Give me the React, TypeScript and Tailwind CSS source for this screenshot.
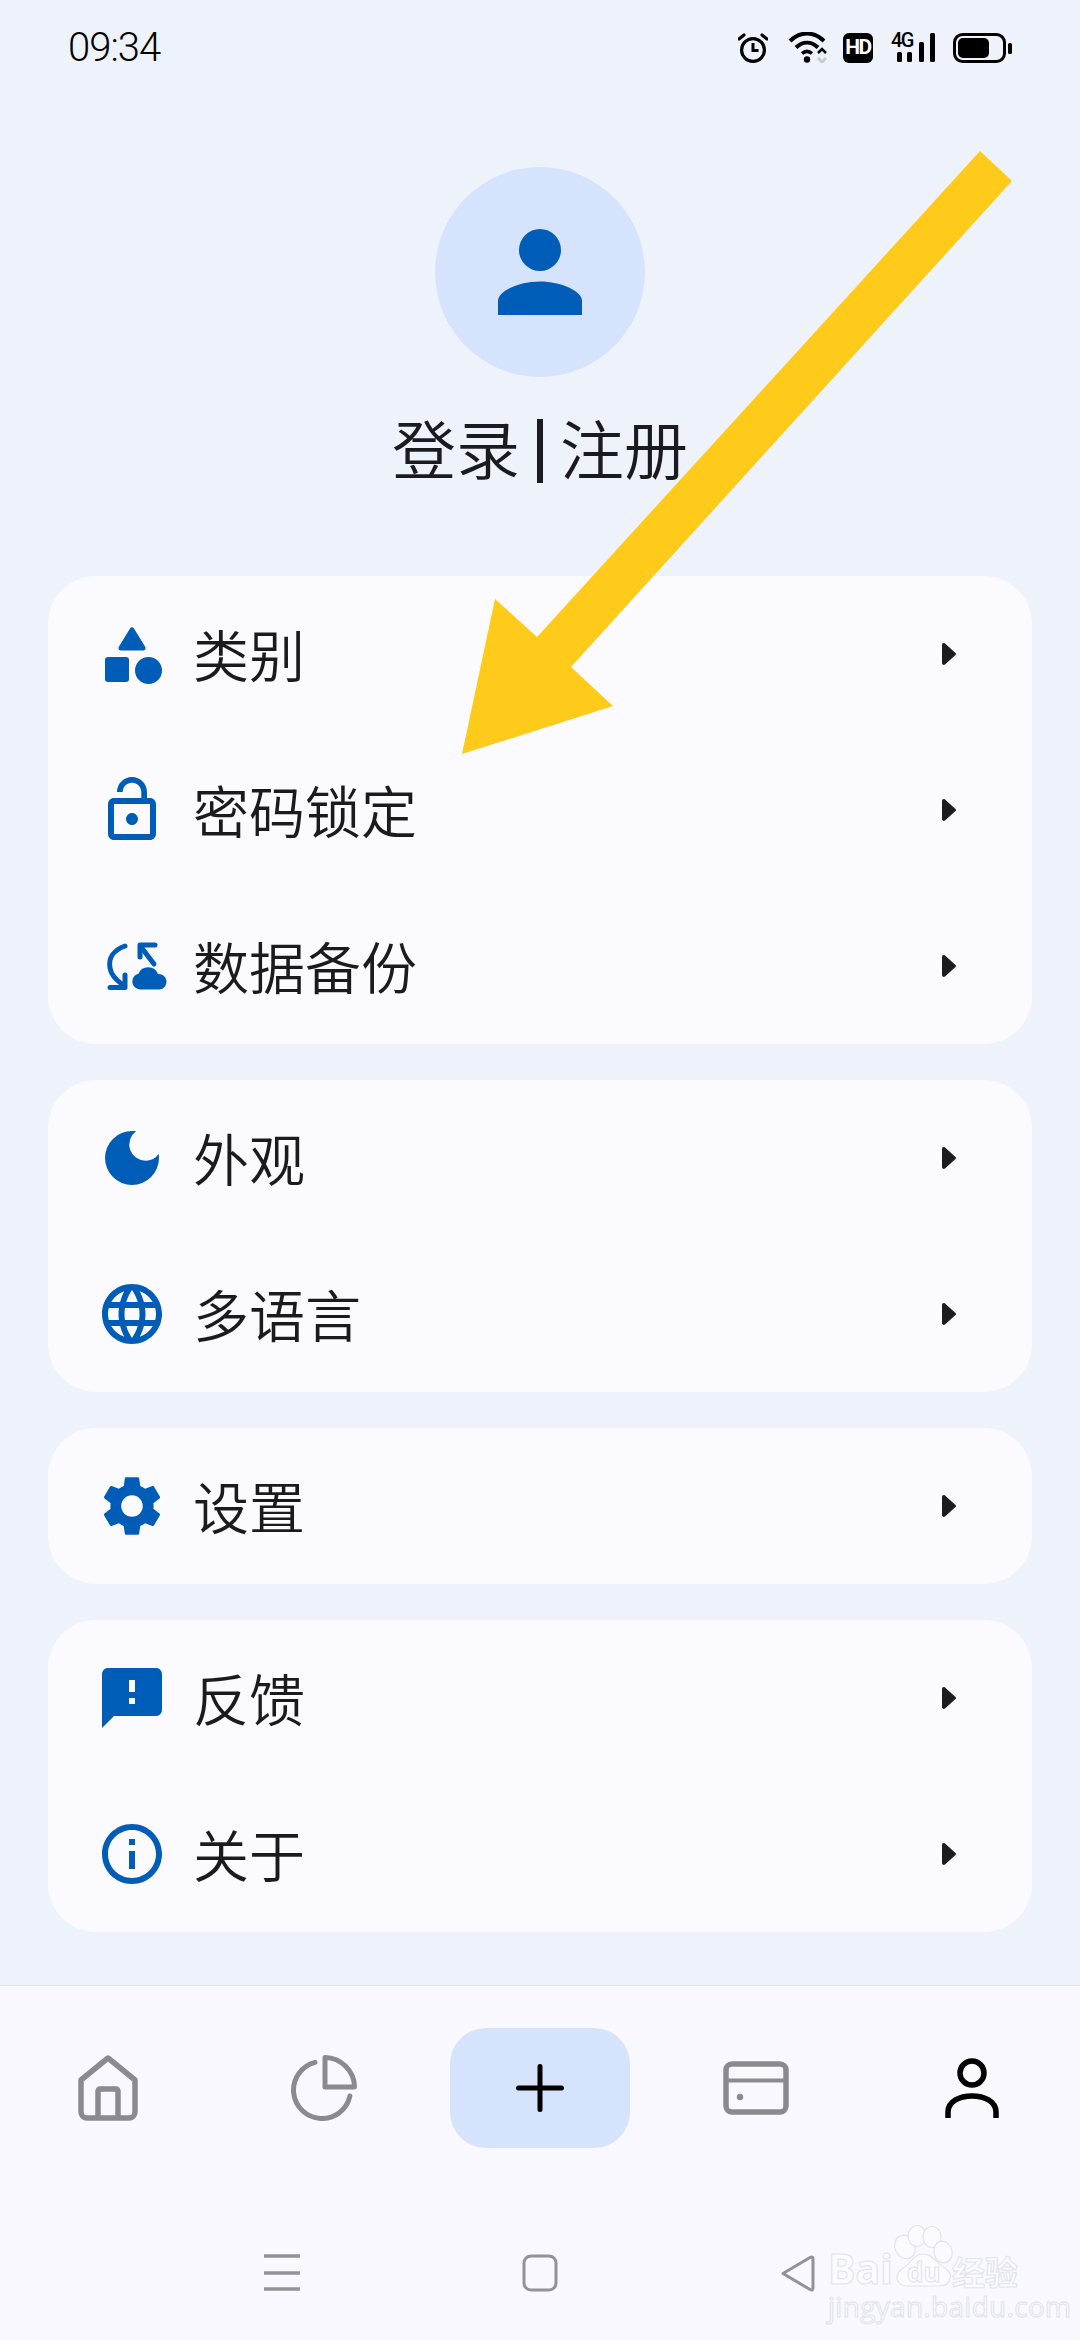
import type { ReactNode } from "react";
import {
  MdDarkMode,
  MdFeedback,
  MdInfoOutline,
  MdLanguage,
  MdLockOpen,
  MdSettings,
} from "react-icons/md";

const CategoryIcon = () => (
  <svg width="72" height="72" viewBox="0 0 72 72" fill="#005db7">
    <polygon points="36,12 47,30 25,30" stroke="#005db7" strokeWidth="5" strokeLinejoin="round" />
    <rect x="9" y="39" width="24" height="25" rx="3" />
    <circle cx="52.5" cy="52.5" r="13.5" />
  </svg>
);

const BackupIcon = () => (
  <svg width="72" height="72" viewBox="0 0 72 72" fill="none" stroke="#005db7" strokeWidth="5" strokeLinecap="round" strokeLinejoin="round">
    <path d="M29 16C18 20 12 28 14 38c1 7 6 12 13 17" />
    <path d="M14 57.5H29V45" />
    <path d="M59 15H44V27" />
    <path d="M45 17L58 34" />
    <path d="M44 59.5a8 8 0 0 1-1.5-15.8A10.5 10.5 0 0 1 62 44a7.7 7.7 0 0 1 1.5 15.5z" fill="#005db7" stroke="none" />
  </svg>
);

const Chevron = () => (
  <svg width="14" height="22" viewBox="0 0 14 22" fill="#1c1c1f">
    <path d="M3 0.5L13.5 10a1.4 1.4 0 0 1 0 2L3 21.5C1.5 22.5 0 21.5 0 20V2C0 0.5 1.5-0.5 3 0.5z" />
  </svg>
);

type Item = { label: string; icon: ReactNode };

const blue = "text-[#005db7]";
const groups: Item[][] = [
  [
    { label: "类别", icon: <CategoryIcon /> },
    { label: "密码锁定", icon: <MdLockOpen size={72} className={blue} /> },
    { label: "数据备份", icon: <BackupIcon /> },
  ],
  [
    { label: "外观", icon: <MdDarkMode size={72} className={blue} /> },
    { label: "多语言", icon: <MdLanguage size={72} className={blue} /> },
  ],
  [{ label: "设置", icon: <MdSettings size={72} className={blue} /> }],
  [
    { label: "反馈", icon: <MdFeedback size={72} className={blue} /> },
    { label: "关于", icon: <MdInfoOutline size={72} className={blue} /> },
  ],
];

function StatusBar() {
  return (
    <div className="flex h-[96px] items-start justify-between pl-[68px] pr-[68px] pt-[25px]">
      <span className="text-[40px] font-light leading-[46px] tracking-[-1px] text-black [font-family:Roboto,sans-serif]">09:34</span>
      <div className="flex items-center pt-[7px]">
        {/* alarm */}
        <svg width="30" height="31" viewBox="0 0 30 31" fill="none" stroke="#000" strokeWidth="3.2">
          <circle cx="15" cy="18" r="11.4" />
          <path d="M15 11v7.5h5.5" strokeWidth="3" />
          <path d="M1 7l5-4M29 7l-5-4" strokeLinecap="round" />
        </svg>
        {/* wifi */}
        <svg className="ml-[20px]" width="40" height="31" viewBox="0 0 40 31" fill="none">
          <path d="M2 9C12-1 26-1 36 9" stroke="#000" strokeWidth="4" />
          <path d="M8 15.5c7-6.5 15-6.500 22 0" stroke="#000" strokeWidth="4" />
          <path d="M14 21.500c3.500-3 6.500-3 10 0" stroke="#000" strokeWidth="3.500" />
          <circle cx="19" cy="27.500" r="3.200" fill="#000" />
          <path d="M30 21l4-4 4 4" stroke="#000" strokeWidth="2.500" />
          <path d="M30 26l4 4 4-4" stroke="#c9c9ce" strokeWidth="3" />
        </svg>
        {/* hd */}
        <div className="ml-[15px] flex h-[30px] w-[30px] items-center justify-center rounded-[6px] bg-black">
          <span className="text-[21px] font-bold leading-none tracking-[-1.5px] text-white [font-family:Roboto,sans-serif]">HD</span>
        </div>
        {/* signal */}
        <div className="relative ml-[18px] h-[31px] w-[45px]">
          <span className="absolute left-0 top-[-2px] text-[20px] font-medium leading-[20px] tracking-[-1.5px] text-black [font-family:Roboto,sans-serif]">4G</span>
          <svg className="absolute left-0 top-0" width="45" height="31" viewBox="0 0 45 31" fill="#000">
            <rect x="6" y="20" width="5" height="10" rx="1.500" />
            <rect x="16" y="20" width="5" height="10" rx="1.500" />
            <rect x="28" y="10" width="5" height="20" rx="1.500" />
            <rect x="39" y="1" width="5" height="29" rx="1.500" />
          </svg>
        </div>
        {/* battery */}
        <svg className="ml-[17px]" width="59" height="30" viewBox="0 0 59 30" fill="none">
          <rect x="1.500" y="1.500" width="50" height="27" rx="8" stroke="#000" strokeWidth="3" />
          <rect x="5" y="5" width="31" height="20" rx="5" fill="#000" />
          <rect x="55" y="10" width="4" height="11" rx="1.500" fill="#000" />
        </svg>
      </div>
    </div>
  );
}

function Profile() {
  return (
    <div className="flex flex-col items-center pt-[71px]">
      <div className="flex h-[210px] w-[210px] items-center justify-center rounded-full bg-[#d5e3fc]">
        <svg width="84" height="86" viewBox="0 0 84 86" fill="#005db7">
          <circle cx="42" cy="21" r="21" />
          <path d="M0 86V72C0 62 21 52.500 42 52.500S84 62 84 72V86z" />
        </svg>
      </div>
      <div className="mt-[34px] flex h-[80px] items-center text-[64px] font-[350] leading-[80px] text-[#1b1b1f]">
        <span className="pb-[10px]">登录</span>
        <span className="mx-[17px] h-[64px] w-[6px] bg-[#1b1b1f]" />
        <span className="pb-[10px]">注册</span>
      </div>
    </div>
  );
}

function Row({ item }: { item: Item }) {
  return (
    <div className="flex h-[156px] items-center pl-[48px] pr-[76px]">
      <div className="h-[72px] w-[72px] shrink-0">{item.icon}</div>
      <span className="ml-[25px] flex-1 pb-[3px] text-[56px] font-[350] leading-[72px] text-[#1b1b1f]">{item.label}</span>
      <Chevron />
    </div>
  );
}

function BottomNav() {
  const grey = "#8b8b8f";
  return (
    <div className="flex-1 border-t border-[#e3e6ee] bg-[#f8f8fe]">
      <div className="grid grid-cols-5 pt-[42px]">
        <div className="flex h-[120px] items-center justify-center">
          <svg width="60" height="66" viewBox="0 0 60 66" fill="none" stroke={grey} strokeWidth="5.500" strokeLinejoin="round">
            <path d="M3 25L30 3l27 22v32a6 6 0 0 1-6 6H9a6 6 0 0 1-6-6z" />
            <path d="M20 63V36a2 2 0 0 1 2-2h16a2 2 0 0 1 2 2v27" />
          </svg>
        </div>
        <div className="flex h-[120px] items-center justify-center">
          <svg width="66" height="66" viewBox="0 0 66 66" fill="none" stroke={grey} strokeWidth="5" strokeLinejoin="round" strokeLinecap="round">
            <path d="M34 2.500A30 30 0 0 1 63.500 32H34z" />
            <path d="M24 7.400A28.500 28.500 0 1 0 58.900 41" />
          </svg>
        </div>
        <div className="flex items-center justify-center">
          <div className="flex h-[120px] w-[180px] items-center justify-center rounded-[36px] bg-[#d5e3fc]">
            <svg width="48" height="48" viewBox="0 0 48 48" fill="none" stroke="#000" strokeWidth="5" strokeLinecap="round">
              <path d="M24 2.500v43M2.500 24h43" />
            </svg>
          </div>
        </div>
        <div className="flex h-[120px] items-center justify-center">
          <svg width="66" height="54" viewBox="0 0 66 54" fill="none" stroke={grey} strokeWidth="5.500">
            <rect x="3" y="3" width="60" height="48" rx="6" />
            <path d="M3 19.500h60" strokeWidth="4" />
            <circle cx="17" cy="36" r="3.200" fill={grey} stroke="none" />
          </svg>
        </div>
        <div className="flex h-[120px] items-center justify-center">
          <svg width="54" height="60" viewBox="0 0 54 60" fill="none" stroke="#000" strokeWidth="5.500">
            <circle cx="27" cy="15" r="12" />
            <path d="M3 60v-6C3 43 15 38 27 38s24 5 24 16v6" />
          </svg>
        </div>
      </div>
      <div className="mt-[106px] flex justify-center">
        <div className="flex w-[258px] justify-center">
          <svg width="36" height="38" viewBox="0 0 36 38" fill="none" stroke="#929297" strokeWidth="3.500">
            <path d="M0 2h36M0 19h36M0 35h36" />
          </svg>
        </div>
        <div className="flex w-[258px] justify-center">
          <svg width="36" height="38" viewBox="0 0 36 38" fill="none" stroke="#929297" strokeWidth="3">
            <rect x="2" y="2" width="32" height="34" rx="7" />
          </svg>
        </div>
        <div className="flex w-[258px] justify-center">
          <svg width="36" height="38" viewBox="0 0 36 38" fill="none" stroke="#929297" strokeWidth="3" strokeLinejoin="round">
            <path d="M3 19.500L30 3.500c2-1 3-.5 3 1.500v29c0 2-1 2.500-3 1.500z" />
          </svg>
        </div>
      </div>
    </div>
  );
}

function Watermark() {
  const outline = "text-[#fbfbff] [-webkit-text-stroke:1px_#e2e2e9] [font-family:'Open_Sans',sans-serif]";
  return (
    <div className="absolute left-[828px] top-[2225px] h-[95px] w-[195px]">
      <svg className="absolute left-0 top-0" width="195" height="70" viewBox="0 0 195 70" fill="#fbfbff" stroke="#e2e2e9" strokeWidth="1.200">
        <ellipse cx="77" cy="22" rx="10" ry="12" transform="rotate(-25 77 22)" />
        <ellipse cx="89" cy="11" rx="9" ry="10.500" />
        <ellipse cx="104" cy="12" rx="9" ry="10.500" />
        <ellipse cx="115" cy="27" rx="9" ry="11" transform="rotate(-15 115 27)" />
        <path d="M95 29c10 0 14 10 22 14 9 6 6 18-6 18H80c-13 0-14-12-5-18 8-4 10-14 20-14z" />
      </svg>
      <span className={`absolute left-0 top-[22px] text-[41px] font-bold leading-[42px] ${outline}`}>Bai</span>
      <span className={`absolute left-[79px] top-[33px] text-[26px] font-bold leading-[28px] ${outline}`}>du</span>
      <span className="absolute left-[124px] top-[28px] text-[33px] font-bold leading-[36px] text-[#fbfbff] [-webkit-text-stroke:1px_#e2e2e9]">经验</span>
      <span className="absolute left-0 top-[67px] text-[28px] leading-[28px] tracking-[0.3px] text-[#fbfbff] [-webkit-text-stroke:1px_#e2e2e9] [font-family:'Open_Sans',sans-serif]">jingyan.baidu.com</span>
    </div>
  );
}

export default function App() {
  return (
    <div className="relative flex h-[2340px] w-[1080px] flex-col overflow-hidden bg-[#eef2fa] [font-family:'Noto_Sans_CJK_SC','Noto_Sans',sans-serif]">
      <StatusBar />
      <Profile />

      <div className="mt-[85px] flex flex-col gap-[36px] px-[48px] pb-[53px]">
        {groups.map((group) => (
          <div key={group[0].label} className="overflow-hidden rounded-[48px] bg-[#fbfaff]">
            {group.map((item) => (
              <Row key={item.label} item={item} />
            ))}
          </div>
        ))}
      </div>

      <BottomNav />
      <Watermark />

      {/* yellow arrow drawn over the screenshot */}
      <svg className="pointer-events-none absolute left-0 top-0" width="1080" height="2340" viewBox="0 0 1080 2340">
        <polygon points="980,151 1012,181 571,667 613,706 462,754 495,599 537,637" fill="#ffcb1a" />
      </svg>
    </div>
  );
}
